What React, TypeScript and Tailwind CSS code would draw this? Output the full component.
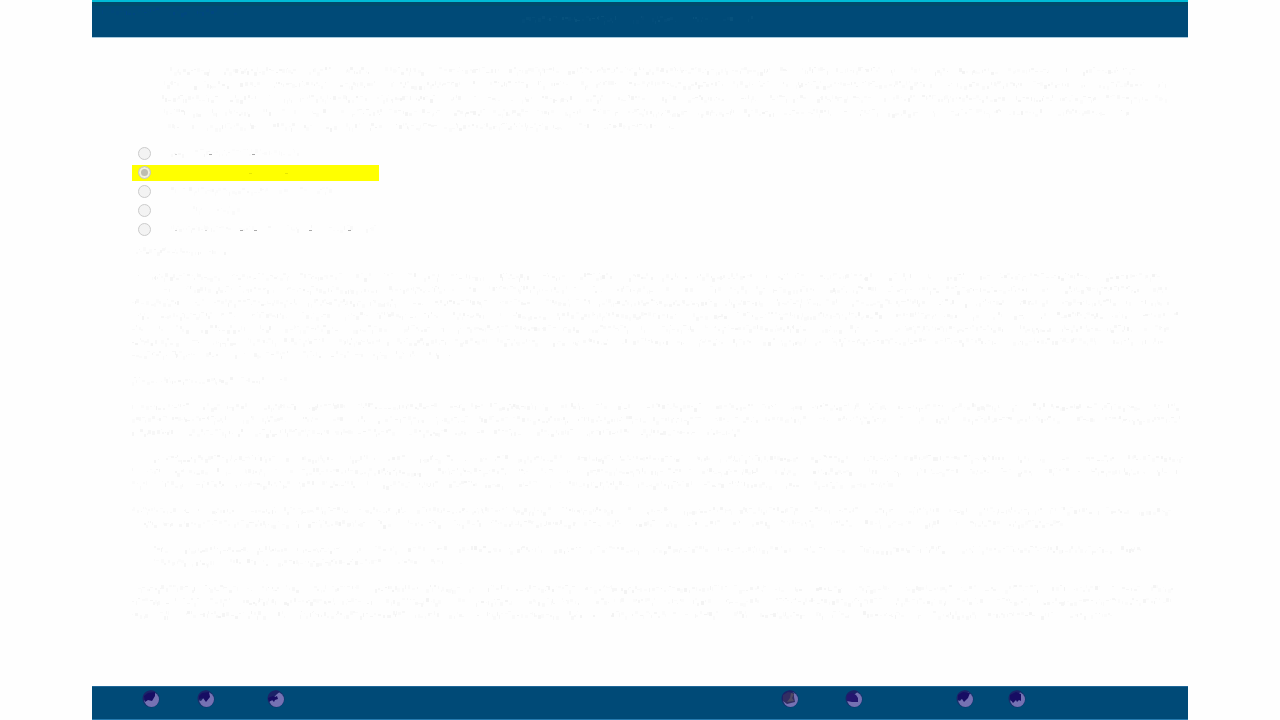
type Line = { start: number; end: number };

const question: Line[] = [
  { start: 8, end: 974 },
  { start: 2, end: 1004 },
  { start: 0, end: 1006 },
  { start: 2, end: 966 },
  { start: 6, end: 510 },
];

const options = [
  { id: "a", name: "Option A", start: 8, end: 140, dots: [46, 89], soft: [12] },
  { id: "b", name: "Option B", start: 8, end: 150, dots: [86, 122], soft: [] },
  { id: "c", name: "Option C", start: 8, end: 168, dots: [], soft: [] },
  { id: "d", name: "Option D", start: 30, end: 76, dots: [], soft: [] },
  { id: "e", name: "Option E", start: 8, end: 214, dots: [77, 91, 146, 185], soft: [12, 42] },
];

const paragraphs: Line[][] = [
  [{ start: 4, end: 96 }],
  [
    { start: 6, end: 1034 },
    { start: 32, end: 1036 },
    { start: 0, end: 1044 },
    { start: 6, end: 1046 },
    { start: 0, end: 1036 },
    { start: 0, end: 1032 },
    { start: 0, end: 318 },
  ],
  [{ start: 0, end: 156 }],
  [
    { start: 0, end: 1050 },
    { start: 0, end: 1050 },
    { start: 0, end: 606 },
  ],
  [
    { start: 22, end: 1050 },
    { start: 0, end: 1046 },
    { start: 0, end: 760 },
  ],
  [
    { start: 0, end: 1040 },
    { start: 12, end: 930 },
  ],
  [
    { start: 22, end: 1010 },
    { start: 22, end: 330 },
  ],
  [
    { start: 6, end: 1040 },
    { start: 0, end: 1044 },
    { start: 0, end: 980 },
  ],
];

// small repeatable generator so that the marks stay the same on each render
function marks(line: Line, seed: number) {
  let n = seed * 7919 + 13;
  const next = () => {
    n = (n * 16807) % 2147483647;
    return n / 2147483647;
  };
  next();
  const out = [];
  let x = line.start;
  while (x < line.end) {
    const w = 1 + Math.floor(next() * 3);
    const o = next();
    out.push({
      x,
      y: 2 + Math.floor(next() * 6),
      w,
      h: 1 + Math.floor(next() * 4),
      o: 0.2 + o * o * 0.6,
    });
    x += w + Math.floor(next() * (next() > 0.85 ? 18 : 3));
  }
  return out;
}

function FaintLine({
  line,
  seed,
  color = "#f0f0f0",
}: {
  line: Line;
  seed: number;
  color?: string;
}) {
  return (
    <svg className="block h-full w-full" aria-hidden="true">
      {marks(line, seed).map((m, i) => (
        <rect key={i} x={m.x} y={m.y} width={m.w} height={m.h} fill={color} opacity={m.o} />
      ))}
    </svg>
  );
}

function OrbIcon({ kind }: { kind: string }) {
  return (
    <svg viewBox="0 0 20 20" className="h-5 w-5" aria-hidden="true">
      <circle cx="10" cy="10" r="8.5" fill="#16306c" />
      <circle cx="10.5" cy="10.5" r="7.5" fill="#7572b3" />
      <path d="M2 11a8 8 0 0 1 12-8.5L10 6l-5 6Z" fill="#1b2268" />
      {kind === "check" && <path d="M3 7 7 4l7-1 0 4-3 5-4-1-3 2Z" fill="#170d63" />}
      {kind === "heart" && <path d="M3 7 6 4l7-1 1 5-4 5-3-4-4 1Z" fill="#170d63" />}
      {kind === "arrow" && <path d="m2 9 5-2 2 1 2-1 1 3-3 1-1 2-2-2-3 2Z" fill="#170d63" />}
      {kind === "person" && (
        <>
          <path d="m3 6 5-3 6 1 0 4 1 5-8 2-4-3Z" fill="#332d62" />
          <path d="m11 4 3 1-2 4 2 3-7 1 3-4Z" fill="#514b64" />
        </>
      )}
      {kind === "home" && <path d="m3 6 5-2 4 2 2 3v4H8l-5-1Z" fill="#24166f" />}
      {kind === "wide" && <path d="M3 6 8 3l7 1-2 5-4 4-2-3-4 1Z" fill="#170d63" />}
      {kind === "bars" && <path d="m3 6 6-3 5 2 0 7-2-1-2 2-1-2-3 3-3-4Z" fill="#170d63" />}
    </svg>
  );
}

function FooterButton({ kind, name }: { kind: string; name: string }) {
  return (
    <button type="button" aria-label={name} className="flex h-8 w-5 items-start pt-[2px]">
      <OrbIcon kind={kind} />
    </button>
  );
}

export default function App() {
  return (
    <div className="flex min-h-screen flex-col bg-[#fefefe] px-[92px] font-['Liberation_Sans',sans-serif]">
      <header className="h-[38px] border-t-2 border-b border-t-[#00bbd6] border-b-[#a5c8dc] bg-[#004a77]">
        <div className="h-1 bg-[#004b6c]" />
        <div className="flex">
          <div className="h-4 w-[430px]">
            <FaintLine line={{ start: 10, end: 145 }} seed={70} color="#004488" />
          </div>
          <div className="h-6 w-[240px] pt-2">
            <FaintLine line={{ start: 0, end: 230 }} seed={71} color="#0a5580" />
          </div>
        </div>
      </header>

      <main className="flex-1 pt-[27px] pl-10">
        <div className="pl-[30px]">
          {question.map((line, i) => (
            <div key={i} className="h-[14px]">
              <FaintLine line={line} seed={i + 1} />
            </div>
          ))}
        </div>

        <fieldset className="mt-[11px] flex flex-col gap-[3px]">
          {options.map((option, i) => (
            <label
              key={option.id}
              className="flex h-4 w-[247px] items-start pt-px pl-[6px] has-checked:bg-[#ffff00]"
            >
              <input
                type="radio"
                name="answer"
                aria-label={option.name}
                defaultChecked={option.id === "b"}
                className="h-[13px] w-[13px] appearance-none rounded-full border border-[#cbcbcb] bg-[#f3f3f3] checked:bg-[#bdbdb0] checked:ring-2 checked:ring-inset checked:ring-[#f0f0dc]"
              />
              <svg className="ml-3 h-[15px] flex-1" aria-hidden="true">
                {i !== 1 &&
                  marks(option, i + 20).map((m, j) => (
                    <rect key={j} x={m.x} y={m.y} width={m.w} height={m.h} fill="#f5f5f5" opacity={m.o} />
                  ))}
                {option.soft.map((x) => (
                  <rect key={x} x={x} y="7" width="2" height="1" fill="#d8d8d8" />
                ))}
                {option.dots.map((x) => (
                  <rect key={x} x={x} y="7" width="3" height="1" fill={i === 1 ? "#e5e500" : "#aaaaaa"} />
                ))}
              </svg>
            </label>
          ))}
        </fieldset>

        <div className="mt-[7px] flex flex-col gap-[13px]">
          {paragraphs.map((lines, i) => (
            <div key={i}>
              {lines.map((line, j) => (
                <div key={j} className="h-[13px]">
                  <FaintLine line={line} seed={i * 10 + j + 40} />
                </div>
              ))}
            </div>
          ))}
        </div>
      </main>

      <footer className="flex h-[34px] justify-between border-t border-b border-t-[#1f6697] border-b-[#267aae] bg-[#004a77] pr-[161px] pl-[49px]">
        <div className="flex">
          <FooterButton kind="check" name="Previous" />
          <div className="ml-[35px]">
            <FooterButton kind="heart" name="Next" />
          </div>
          <div className="ml-[50px]">
            <FooterButton kind="arrow" name="Mark" />
          </div>
        </div>
        <div className="flex">
          <FooterButton kind="person" name="Notes" />
          <div className="ml-[44px]">
            <FooterButton kind="home" name="Home" />
          </div>
          <div className="ml-[91px]">
            <FooterButton kind="wide" name="Review" />
          </div>
          <div className="ml-8">
            <FooterButton kind="bars" name="End" />
          </div>
        </div>
      </footer>
    </div>
  );
}
